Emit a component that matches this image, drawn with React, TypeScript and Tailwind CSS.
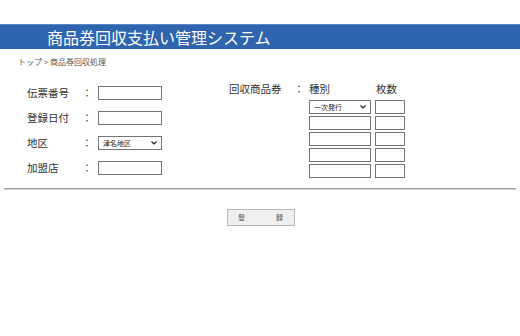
import React from "react";

const jp = { fontFamily: '"Noto Sans CJK JP", "Noto Sans", sans-serif' };

function Box({ w }: { w: string }) {
  return <div className={`${w} h-[14px] border border-[#767676] bg-white`} />;
}

function Sel({ w, text }: { w: string; text: string }) {
  return (
    <div className={`${w} h-[14px] border border-[#767676] bg-white flex items-center justify-between px-[4px]`}>
      <span className="text-[7px] leading-none text-[#222]">{text}</span>
      <svg width="6" height="4" viewBox="0 0 6 4"><path d="M0.5 0.5 L3 3 L5.5 0.5" stroke="#222" strokeWidth="1.2" fill="none" /></svg>
    </div>
  );
}

function Row({ label, children }: { label: string; children: React.ReactNode }) {
  return (
    <div className="flex items-center h-[14px]">
      <span className="w-[55px] text-[10.5px] text-[#333] leading-none">{label}</span>
      <span className="w-[16px] text-[10px] text-[#333] leading-none">：</span>
      {children}
    </div>
  );
}

export default function App() {
  return (
    <div className="w-[520px] h-[336px] bg-white" style={jp}>
      <div className="pt-[24px]">
        <div className="h-[25px] bg-[#2f64ae] border-t border-[#5b86c4] flex items-center pl-[47px]">
          <span className="text-[16px] text-white leading-none">商品券回収支払い管理システム</span>
        </div>
      </div>
      <div className="pl-[18px] pt-[9px] text-[8px] text-[#555] leading-none">トップ &gt; 商品券回収処理</div>
      <div className="flex pt-[14px] h-[122px]">
        <div className="pl-[27px] flex flex-col gap-[11px] pt-[6px]">
          <Row label="伝票番号"><Box w="w-[64px]" /></Row>
          <Row label="登録日付"><Box w="w-[64px]" /></Row>
          <Row label="地区"><Sel w="w-[64px]" text="津名地区" /></Row>
          <Row label="加盟店"><Box w="w-[64px]" /></Row>
        </div>
        <div className="pl-[67px] flex pt-[4px]">
          <div className="flex items-start h-[14px]">
            <span className="w-[65px] text-[10.5px] text-[#333] leading-none">回収商品券</span>
            <span className="w-[15px] text-[10px] text-[#333] leading-none">：</span>
          </div>
          <div className="flex flex-col">
            <div className="flex text-[10.5px] text-[#333] leading-none h-[16px]">
              <span className="w-[67px]">種別</span>
              <span>枚数</span>
            </div>
            <div className="flex flex-col gap-[2px]">
              {[0, 1, 2, 3, 4].map((i) => (
                <div key={i} className="flex gap-[4px]">
                  {i === 0 ? <Sel w="w-[62px]" text="一次発行" /> : <Box w="w-[62px]" />}
                  <Box w="w-[30px]" />
                </div>
              ))}
            </div>
          </div>
        </div>
      </div>
      <div className="mx-[4px] h-[2px] bg-[#a0a0a0] border-b border-[#d0d0d0]" />
      <div className="flex justify-center pt-[19px] pl-[1px]">
        <div className="w-[68px] h-[17px] border border-[#b8b8b8] bg-[#efefef] flex items-center justify-center text-[7px] text-[#555] leading-none gap-[31px]">
          <span>登</span><span>録</span>
        </div>
      </div>
    </div>
  );
}
